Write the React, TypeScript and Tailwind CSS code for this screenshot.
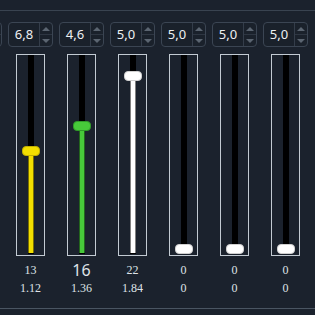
import React from 'react';

interface Channel {
  spin: string;
  thumb: number; // thumb centre, px from top of the track
  color: string;
  border: string;
  top: string;
  bottom: string;
  bigTop?: boolean;
}

const channels: Channel[] = [
  { spin: '6,8', thumb: 96, color: '#f3df00', border: '#c2b000', top: '13', bottom: '1.12' },
  { spin: '4,6', thumb: 71, color: '#47c93a', border: '#2f9a28', top: '16', bottom: '1.36', bigTop: true },
  { spin: '5,0', thumb: 21, color: '#ffffff', border: '#d0d0d0', top: '22', bottom: '1.84' },
  { spin: '5,0', thumb: 194, color: '#ffffff', border: '#d0d0d0', top: '0', bottom: '0' },
  { spin: '5,0', thumb: 194, color: '#ffffff', border: '#d0d0d0', top: '0', bottom: '0' },
  { spin: '5,0', thumb: 194, color: '#ffffff', border: '#d0d0d0', top: '0', bottom: '0' },
];

const SpinBox: React.FC<{ value?: string }> = ({ value }) => (
  <div className="flex h-[25px] w-[45px] shrink-0 rounded-[4px] border border-[#3b4553] bg-[#1a212b]">
    <div className="flex w-[30px] items-center justify-center text-[13px] text-[#eef0f2] font-['Noto_Sans',sans-serif]">
      {value}
    </div>
    <div className="flex flex-1 flex-col border-l border-[#343d4a]">
      <div className="flex flex-1 items-center justify-center border-b border-[#2e3642]">
        <div className="h-0 w-0 border-x-[4px] border-b-[4px] border-x-transparent border-b-[#5b6571]" />
      </div>
      <div className="flex flex-1 items-center justify-center">
        <div className="h-0 w-0 border-x-[4px] border-t-[4px] border-x-transparent border-t-[#5b6571]" />
      </div>
    </div>
  </div>
);

const Fader: React.FC<{ ch: Channel }> = ({ ch }) => (
  <div className="relative h-[202px] w-[29px] border border-[#c3cbd3]">
    <div className="mx-auto h-[199px] w-[6px] bg-black" />
    <div
      className="absolute left-1/2 w-[5px] -translate-x-1/2"
      style={{ top: ch.thumb, height: 198 - ch.thumb, background: ch.color }}
    />
    <div
      className="absolute left-1/2 h-[10px] w-[18px] -translate-x-1/2 -translate-y-1/2 rounded-[4px] border"
      style={{ top: ch.thumb, background: ch.color, borderColor: ch.border }}
    />
  </div>
);

export default function App() {
  return (
    <div className="h-[315px] w-[315px] overflow-hidden bg-[#1b222d]">
      <div className="h-[10px]" />
      <div className="h-px bg-[#394350]" />
      <div className="flex pt-[11px] pl-[5px]">
        {/* edge of the previous channel's spin box, scrolled out of view */}
        <div className="ml-[-48px] w-[48px] shrink-0">
          <SpinBox />
        </div>
        {channels.map((ch, i) => (
          <div key={i} className="flex w-[51px] shrink-0 flex-col items-center">
            <SpinBox value={ch.spin} />
            <div className="h-[7px]" />
            <Fader ch={ch} />
            <div className="mt-[6px] flex h-[16px] items-center text-[#dfe3e7]">
              {ch.bigTop ? (
                <span className="text-[16px] font-['Noto_Sans',sans-serif]">{ch.top}</span>
              ) : (
                <span className="text-[12px] font-['Liberation_Serif',serif]">{ch.top}</span>
              )}
            </div>
            <div className="mt-[2px] flex h-[16px] items-center text-[12px] text-[#dfe3e7] font-['Liberation_Serif',serif]">
              {ch.bottom}
            </div>
          </div>
        ))}
      </div>
      <div className="mt-[12px] h-px bg-[#4a5562]" />
    </div>
  );
}
